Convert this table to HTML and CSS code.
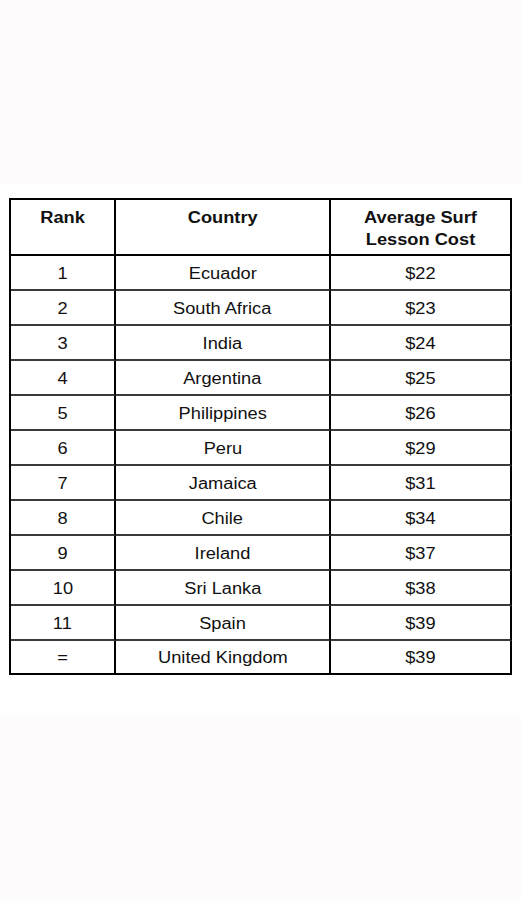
FILE: index.html
```html
<!DOCTYPE html>
<html lang="en">
<head>
<meta charset="utf-8">
<title>Average Surf Lesson Cost</title>
<link rel="stylesheet" href="styles.css">
</head>
<body>
<div class="sheet">
  <div class="grid">
    <div class="cell head"><span>Rank</span></div>
    <div class="cell head"><span>Country</span></div>
    <div class="cell head"><span>Average Surf<br>Lesson Cost</span></div>

    <div class="cell"><span>1</span></div><div class="cell"><span>Ecuador</span></div><div class="cell"><span>$22</span></div>
    <div class="cell"><span>2</span></div><div class="cell"><span>South Africa</span></div><div class="cell"><span>$23</span></div>
    <div class="cell"><span>3</span></div><div class="cell"><span>India</span></div><div class="cell"><span>$24</span></div>
    <div class="cell"><span>4</span></div><div class="cell"><span>Argentina</span></div><div class="cell"><span>$25</span></div>
    <div class="cell"><span>5</span></div><div class="cell"><span>Philippines</span></div><div class="cell"><span>$26</span></div>
    <div class="cell"><span>6</span></div><div class="cell"><span>Peru</span></div><div class="cell"><span>$29</span></div>
    <div class="cell"><span>7</span></div><div class="cell"><span>Jamaica</span></div><div class="cell"><span>$31</span></div>
    <div class="cell"><span>8</span></div><div class="cell"><span>Chile</span></div><div class="cell"><span>$34</span></div>
    <div class="cell"><span>9</span></div><div class="cell"><span>Ireland</span></div><div class="cell"><span>$37</span></div>
    <div class="cell"><span>10</span></div><div class="cell"><span>Sri Lanka</span></div><div class="cell"><span>$38</span></div>
    <div class="cell"><span>11</span></div><div class="cell"><span>Spain</span></div><div class="cell"><span>$39</span></div>
    <div class="cell last"><span>=</span></div><div class="cell last"><span>United Kingdom</span></div><div class="cell last"><span>$39</span></div>
  </div>
</div>
</body>
</html>
```

FILE: styles.css
```css
html, body {
  margin: 0;
  padding: 0;
  background: #fdfbfc;
}

body {
  font-family: "Liberation Sans", Arial, sans-serif;
  color: #111;
}

.sheet {
  margin-top: 184px;
  height: 531px;
  background: #ffffff;
  padding: 14px 9px 0 9px;
  box-sizing: border-box;
}

.grid {
  display: grid;
  grid-template-columns: 105px 215px 181px;
  grid-template-rows: 56px repeat(11, 35px) 34px;
  width: 501px;
  border-top: 2px solid #000;
  border-left: 2px solid #000;
}

.cell {
  box-sizing: border-box;
  border-right: 2px solid #000;
  border-bottom: 2px solid #3a3a3a;
  display: flex;
  align-items: center;
  justify-content: center;
  padding-top: 2px;
  font-size: 16px;
  line-height: 22px;
  text-align: center;
}

.cell span {
  display: inline-block;
  transform: scaleX(1.14);
}

.head {
  align-items: flex-start;
  padding-top: 7px;
  font-weight: bold;
  border-bottom-color: #000;
}

.last {
  border-bottom-color: #000;
}
```
